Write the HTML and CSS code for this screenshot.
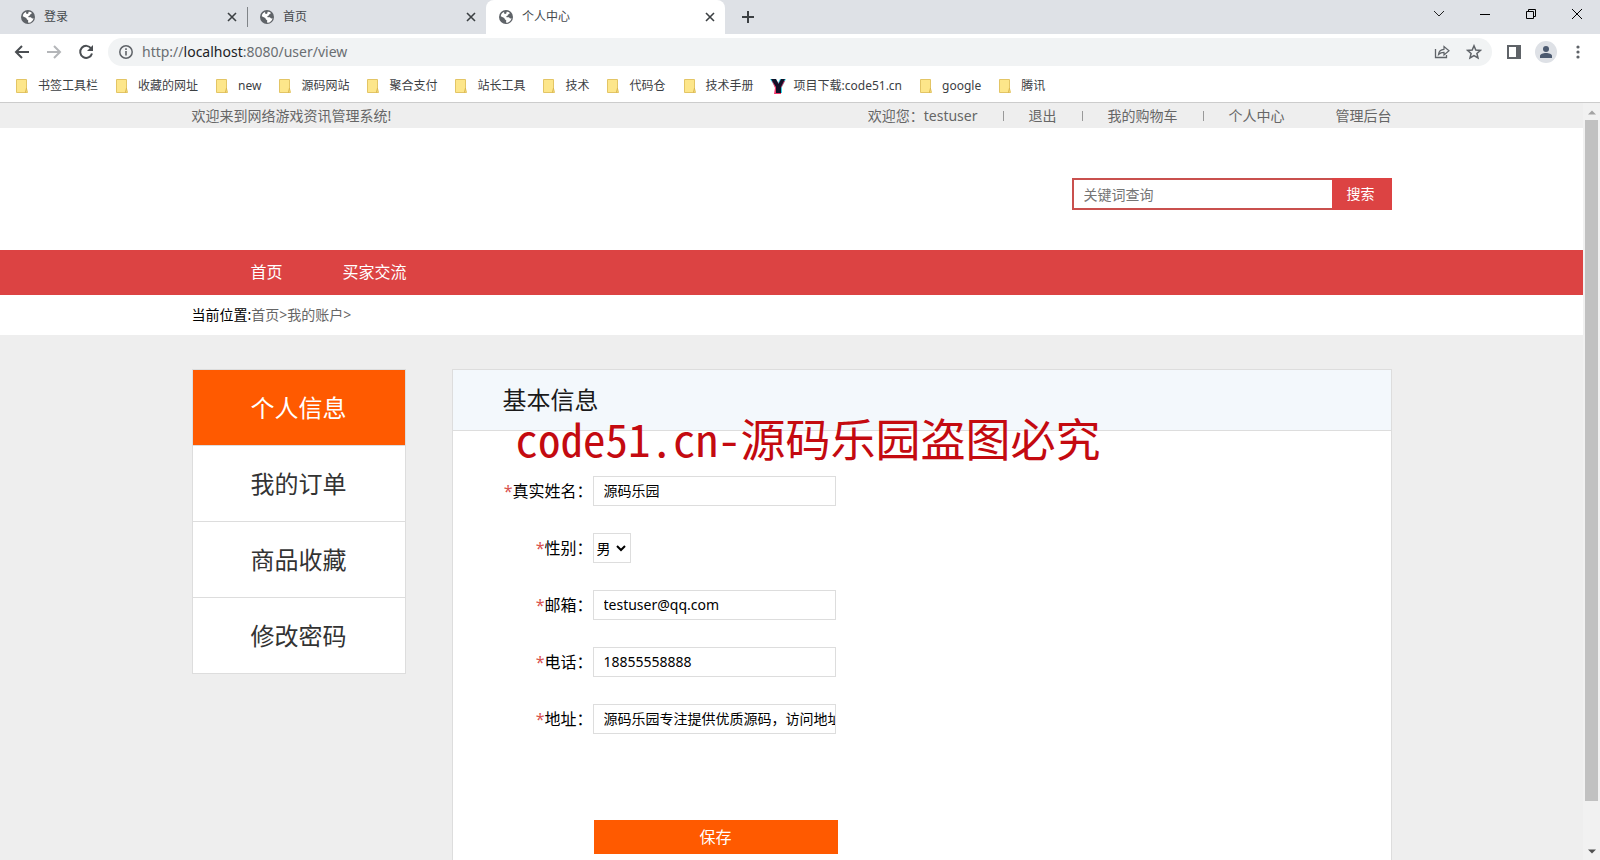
FILE: index.html
```html
<!DOCTYPE html>
<html lang="zh-CN">
<head>
<meta charset="utf-8">
<title>个人中心</title>
<link rel="stylesheet" href="styles.css">
</head>
<body>
<svg class="defs" aria-hidden="true">
  <symbol id="globe" viewBox="0 0 24 24"><path fill="#5f6368" d="M12 0a12 12 0 1 0 0 24 12 12 0 0 0 0-24z"/><path fill="#fff" d="M13 3c2 0 4 .5 5.500 2l-1 2-2 .5-.5 2-2.500 1 .5 2h4l2 2 2.500-.5c-.6 4-4 7.500-8.500 8l-1-1 .5-3-2.500-2-1-2.500L3 10.500C3.600 6.800 6 4 9 3l-.5 2.500L10.500 7l2-1z"/></symbol>
  <symbol id="cross" viewBox="0 0 10 10"><path d="M1 1l8 8M9 1l-8 8" stroke="#3c4043" stroke-width="1.600" fill="none"/></symbol>
  <symbol id="folder" viewBox="0 0 12 14"><path d="M.5.5h10v9l1 4H.5z" fill="#fde68a" stroke="#e3c565"/><path d="M9.500 13.500l1-4.500" stroke="#d9b44a" fill="none"/></symbol>
</svg>
<header class="browser">
  <div class="tabs">
    <div class="tab"><svg class="favicon"><use href="#globe"/></svg><span class="tab-name">登录</span><button class="tab-close" aria-label="关闭"><svg><use href="#cross"/></svg></button></div>
    <div class="tab divided"><svg class="favicon"><use href="#globe"/></svg><span class="tab-name">首页</span><button class="tab-close" aria-label="关闭"><svg><use href="#cross"/></svg></button></div>
    <div class="tab active"><svg class="favicon"><use href="#globe"/></svg><span class="tab-name">个人中心</span><button class="tab-close" aria-label="关闭"><svg><use href="#cross"/></svg></button></div>
    <button class="new-tab" aria-label="新标签页"><svg width="12" height="12"><path d="M6 0v12M0 6h12" stroke="#3c4043" stroke-width="2"/></svg></button>
    <div class="window-buttons">
      <button aria-label="搜索标签页"><svg width="12" height="12"><path d="M1 3l5 5 5-5" fill="none" stroke="#222"/></svg></button>
      <button aria-label="最小化"><svg width="12" height="12"><path d="M1 6.500h10" stroke="#000"/></svg></button>
      <button aria-label="还原"><svg width="12" height="12"><path d="M1.500 3.500h7v7h-7zM3.500 3.500v-2h7v7h-2" fill="none" stroke="#000"/></svg></button>
      <button aria-label="关闭窗口"><svg width="12" height="12"><path d="M1 1l10 10M11 1L1 11" stroke="#000"/></svg></button>
    </div>
  </div>
  <div class="toolbar">
    <button aria-label="后退"><svg width="16" height="16"><path d="M15 8H2M8 2L2 8l6 6" fill="none" stroke="#4a4e52" stroke-width="2"/></svg></button>
    <button aria-label="前进"><svg width="16" height="16"><path d="M1 8h13M8 2l6 6-6 6" fill="none" stroke="#b4b6b9" stroke-width="2"/></svg></button>
    <button aria-label="重新加载"><svg width="16" height="16"><path d="M13.200 4.500A6 6 0 1 0 14 9.500" fill="none" stroke="#4a4e52" stroke-width="2"/><path d="M15 1v6H9z" fill="#4a4e52"/></svg></button>
    <div class="omnibox">
      <svg width="14" height="14"><circle cx="7" cy="7" r="6.200" fill="none" stroke="#5f6368" stroke-width="1.500"/><path d="M7 6v4.500M7 3.300v1.600" stroke="#5f6368" stroke-width="1.600"/></svg>
      <span class="url">http://<b>localhost</b>:8080/user/view</span>
      <button aria-label="分享"><svg width="16" height="16"><path d="M1.500 5v8.500h11V11" fill="none" stroke="#5f6368" stroke-width="1.300"/><path d="M4.500 10.500c.4-3.500 2.500-5 5.500-5.200V2.500l5 4.300-5 4.200V8.300c-2.500 0-4 .6-5.500 2.200z" fill="none" stroke="#5f6368" stroke-width="1.200"/></svg></button>
      <button aria-label="收藏"><svg width="16" height="16"><path d="M8 1.800l1.800 4.200 4.600.4-3.500 3 1.100 4.500L8 11.500l-4 2.400 1.100-4.500-3.500-3L6.200 6z" fill="none" stroke="#5f6368" stroke-width="1.500"/></svg></button>
    </div>
    <button aria-label="侧边栏"><svg width="14" height="14"><path d="M1 1h12v12H1z" fill="#fff" stroke="#5f6368" stroke-width="2"/><path d="M9 0h5v14H9z" fill="#5f6368"/></svg></button>
    <button aria-label="用户"><svg width="22" height="22"><circle cx="11" cy="11" r="11" fill="#dee1e6"/><circle cx="11" cy="8" r="3" fill="#4c5a70"/><path d="M5 17v-2c0-2 3-3 6-3s6 1 6 3v2z" fill="#4c5a70"/></svg></button>
    <button aria-label="菜单"><svg width="4" height="14"><circle cx="2" cy="2" r="1.600" fill="#5f6368"/><circle cx="2" cy="7" r="1.600" fill="#5f6368"/><circle cx="2" cy="12" r="1.600" fill="#5f6368"/></svg></button>
  </div>
  <nav class="bookmarks">
    <a href="#"><svg><use href="#folder"/></svg>书签工具栏</a>
    <a href="#"><svg><use href="#folder"/></svg>收藏的网址</a>
    <a href="#"><svg><use href="#folder"/></svg>new</a>
    <a href="#"><svg><use href="#folder"/></svg>源码网站</a>
    <a href="#"><svg><use href="#folder"/></svg>聚合支付</a>
    <a href="#"><svg><use href="#folder"/></svg>站长工具</a>
    <a href="#"><svg><use href="#folder"/></svg>技术</a>
    <a href="#"><svg><use href="#folder"/></svg>代码仓</a>
    <a href="#"><svg><use href="#folder"/></svg>技术手册</a>
    <a href="#"><svg class="brand" viewBox="0 0 16 16"><path d="M0 1h6l2 4 2-4h6l-4 8v6H5V9z" fill="#35d6e6"/><path d="M2 3h5l2 3 1-3h5l-4 7v6H4l1-6z" fill="#f0386b"/><path d="M1 1h5l2.500 5L11 1h4l-4 8v6H6V9z" fill="#101028"/></svg>项目下载:code51.cn</a>
    <a href="#"><svg><use href="#folder"/></svg>google</a>
    <a href="#"><svg><use href="#folder"/></svg>腾讯</a>
  </nav>
</header>
<div class="viewport">
  <div class="page">
    <div class="topbar">
      <div class="container">
        <span>欢迎来到网络游戏资讯管理系统!</span>
        <ul class="account">
          <li><a href="#">欢迎您：testuser</a></li>
          <li><a href="#">退出</a></li>
          <li><a href="#">我的购物车</a></li>
          <li><a href="#">个人中心</a></li>
          <li><a href="#">管理后台</a></li>
        </ul>
      </div>
    </div>
    <div class="masthead">
      <form class="container search">
        <input type="text" placeholder="关键词查询" aria-label="关键词查询">
        <button type="button">搜索</button>
      </form>
    </div>
    <nav class="mainnav">
      <div class="container"><a href="#">首页</a><a href="#">买家交流</a></div>
    </nav>
    <div class="crumbs">
      <div class="container">当前位置:<a href="#">首页</a><i>&gt;</i><a href="#">我的账户</a><i>&gt;</i></div>
    </div>
    <div class="container content">
      <aside class="side">
        <a class="current" href="#">个人信息</a>
        <a href="#">我的订单</a>
        <a href="#">商品收藏</a>
        <a href="#">修改密码</a>
      </aside>
      <main class="panel">
        <h1>基本信息</h1>
        <form class="profile">
          <label for="name"><em>*</em>真实姓名：</label><input id="name" type="text" value="源码乐园">
          <label for="sex"><em>*</em>性别：</label><span class="select"><select id="sex"><option>男</option><option>女</option></select><svg width="10" height="7"><path d="M1 1l4 4 4-4" fill="none" stroke="#000" stroke-width="2"/></svg></span>
          <label for="mail"><em>*</em>邮箱：</label><input id="mail" type="text" value="testuser@qq.com">
          <label for="phone"><em>*</em>电话：</label><input id="phone" type="text" value="18855558888">
          <label for="addr"><em>*</em>地址：</label><input id="addr" type="text" value="源码乐园专注提供优质源码，访问地址code51.cn">
          <button class="save" type="button">保存</button>
        </form>
        <div class="watermark">code51.cn-源码乐园盗图必究</div>
      </main>
    </div>
  </div>
  <div class="scrollbar">
    <svg width="8" height="5"><path d="M0 4.500L4 .5l4 4z" fill="#a3a3a3"/></svg>
    <div class="track"><div class="thumb"></div></div>
    <svg width="8" height="5"><path d="M0 .5l4 4 4-4z" fill="#505050"/></svg>
  </div>
</div>
</body>
</html>
```
FILE: styles.css
```css
* { box-sizing: border-box; }
body {
  margin: 0;
  height: 100vh;
  display: flex;
  flex-direction: column;
  overflow: hidden;
  background: #fff;
  color: #000;
  font: 14px/20px "Noto Sans", "Noto Sans CJK SC", sans-serif;
}
a { color: inherit; text-decoration: none; }
button, input, select { font: inherit; margin: 0; }
button { border: 0; padding: 0; background: none; display: grid; place-items: center; }
svg { display: block; flex: none; }
.defs { position: absolute; width: 0; height: 0; }

/* browser chrome */
.browser { flex: none; border-bottom: 1px solid #ccc; }
.tabs { display: flex; height: 34px; padding-left: 8px; background: #dee1e6; font-size: 12px; color: #45494d; }
.tab { flex: 0 1 239px; display: flex; align-items: center; gap: 9px; padding: 0 9px 0 13px; }
.tab.divided { background: linear-gradient(#808488, #808488) left center / 1px 20px no-repeat; }
.tab.active { background: #fff; border-radius: 8px 8px 0 0; }
.favicon { width: 14px; height: 14px; }
.tab-name { flex: 1; }
.tab-close { width: 12px; height: 12px; }
.tab-close svg { width: 10px; height: 10px; }
.new-tab { width: 46px; }
.window-buttons { display: flex; margin-left: auto; height: 28px; }
.window-buttons button { width: 46px; }
.toolbar { display: flex; align-items: center; height: 36px; padding: 0 6px; }
.toolbar > button { width: 32px; height: 28px; }
.omnibox { flex: 1; display: flex; align-items: center; height: 28px; margin: 0 6px; padding: 0 2px 0 11px; border-radius: 14px; background: #f1f3f4; }
.url { flex: 1; padding-left: 9px; color: #6a6e72; }
.url b { font-weight: 400; color: #202124; }
.omnibox button { width: 32px; height: 28px; }
.bookmarks { display: flex; align-items: center; gap: 18px; height: 32px; padding: 0 16px; font-size: 12px; color: #3c4043; white-space: nowrap; }
.bookmarks a { display: flex; align-items: center; gap: 10px; }
.bookmarks svg { width: 12px; height: 14px; }
.bookmarks .brand { width: 16px; height: 16px; margin: 0 -2px; }

/* page */
.viewport { flex: 1; min-height: 0; display: flex; background: #eee; }
.page { flex: 1; min-width: 0; overflow: hidden; }
.container { max-width: 1200px; margin: 0 auto; }
.topbar { color: #666; }
.topbar .container { display: flex; justify-content: space-between; align-items: center; height: 25px; }
.account { display: flex; list-style: none; margin: 0; padding: 0; }
.account li { display: flex; align-items: center; }
.account li + li::before { content: ""; width: 1px; height: 10px; margin: 0 25px; background: #999; }
.account li:last-child::before { background: none; }
.masthead { background: #fff; padding: 50px 0 40px; }
.search { display: flex; justify-content: flex-end; }
.search input { width: 260px; height: 32px; padding: 0 10px; border: 2px solid #c9504e; border-right: 0; border-radius: 0; background: #fff; }
.search input::placeholder { color: #757575; }
.search button { width: 60px; height: 32px; padding-right: 2px; background: #dc4343; color: #fff; }
.mainnav { background: #dc4343; color: #fff; font-size: 16px; line-height: 45px; }
.mainnav .container { padding-left: 29px; }
.mainnav a { display: inline-block; padding: 0 30px; }
.crumbs { background: #fff; line-height: 40px; }
.crumbs a, .crumbs i { color: #666; font-style: normal; }
.content { display: flex; align-items: flex-start; gap: 46px; padding-top: 34px; }
.side { flex: 0 0 214px; border: 1px solid #ddd; background: #fff; color: #333; font-size: 24px; line-height: 75px; text-align: center; }
.side a { display: block; }
.side a + a { border-top: 1px solid #ddd; }
.side .current { background: #ff5a00; color: #fff; }
.panel { flex: 1; position: relative; border: 1px solid #ddd; background: #fff; }
.panel h1 { margin: 0; padding-left: 50px; border-bottom: 1px solid #ddd; background: #f3f8fc; color: #1a1a1a; font-size: 24px; font-weight: 400; line-height: 60px; }
.profile { display: grid; grid-template-columns: 140px 1fr; row-gap: 27px; padding: 45px 0 60px; justify-items: start; line-height: 30px; }
.profile label { height: 30px; justify-self: end; font-size: 16px; white-space: nowrap; }
.profile em { color: #d9534f; font-style: normal; }
.profile input { width: 243px; height: 30px; padding: 0 0 0 10px; border: 1px solid #ddd; border-radius: 0; background: #fff; }
.select { position: relative; display: flex; height: 30px; }
.select select { appearance: none; width: 38px; height: 30px; padding: 0 3px; border: 1px solid #ddd; border-radius: 0; background: #fff; color: #000; }
.select svg { position: absolute; right: 5px; top: 12px; pointer-events: none; }
.save { grid-column: 2; width: 244px; height: 34px; margin: 59px 0 0 1px; background: #ff5a00; color: #fff; font-size: 16px; }
.watermark { position: absolute; left: 63px; top: 41px; color: #c40a10; font: 45px/54px "Noto Sans CJK SC", sans-serif; font-feature-settings: "hwid"; white-space: nowrap; pointer-events: none; }
.scrollbar { flex: 0 0 17px; display: flex; flex-direction: column; align-items: center; padding: 7px 0 6px; background: #f1f1f1; }
.track { flex: 1; width: 13px; padding: 5px 0; }
.thumb { height: 94%; background: #c1c1c1; }
```
